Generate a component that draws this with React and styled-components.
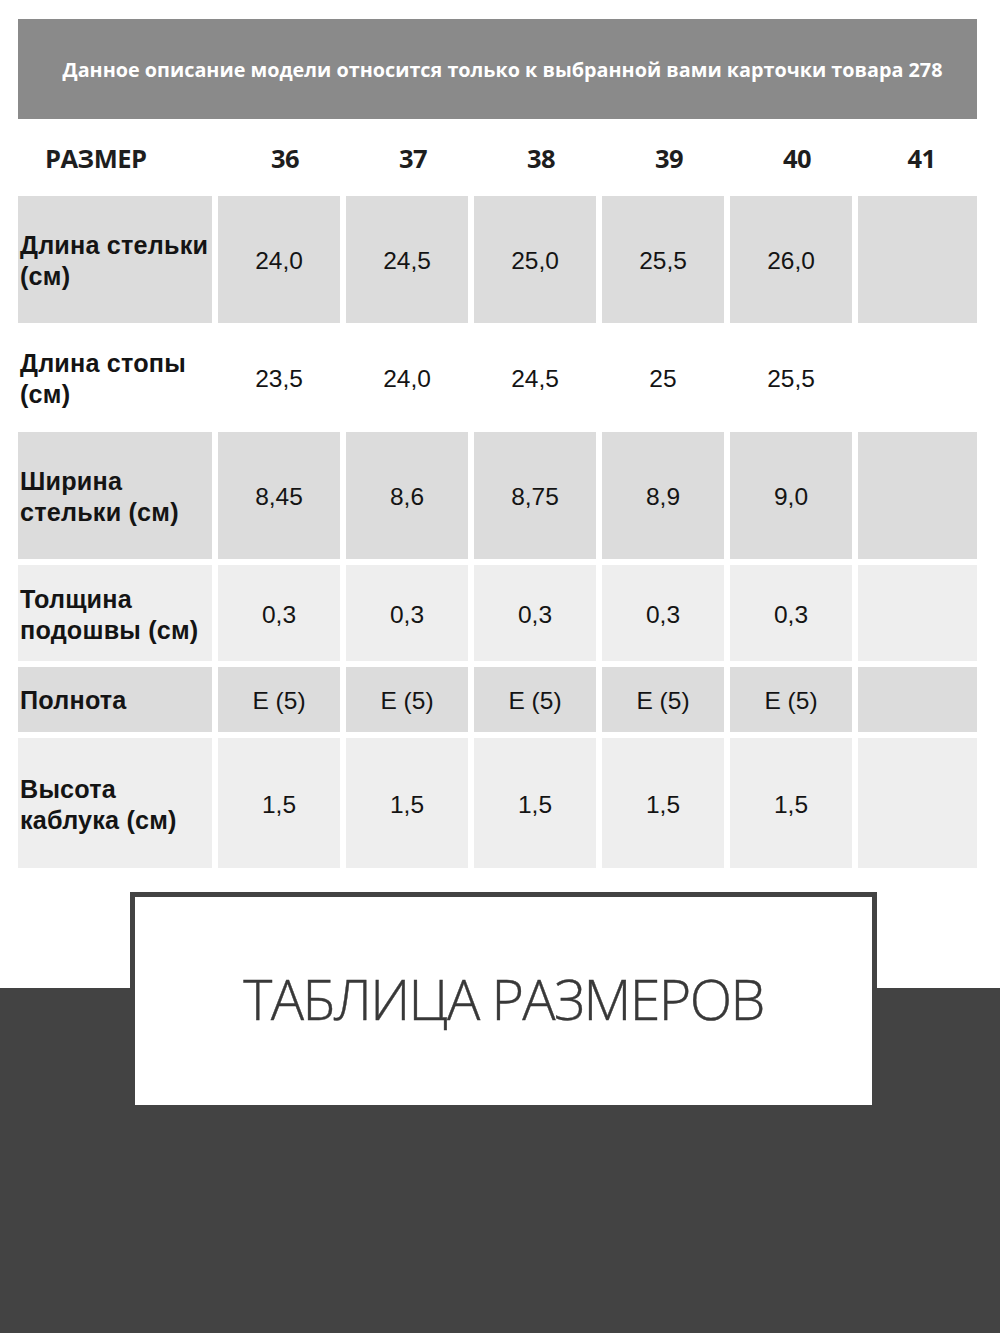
import React from 'react';
import styled, { createGlobalStyle } from 'styled-components';

const VARS = {
  bar: '#8a8a8a',
  cellDark: '#dcdcdc',
  cellLight: '#eeeeee',
  ink: '#141414',
  band: '#434343',
};

const GlobalStyle = createGlobalStyle`
  html, body {
    margin: 0;
    padding: 0;
    background: #fff;
  }
  body {
    font-family: "Liberation Sans", Arial, sans-serif;
  }
`;

const Page = styled.div`
  width: 1000px;
  height: 1333px;
  overflow: hidden;
  background: #fff;
`;

const TableArea = styled.div`
  padding: 19px 23px 0 18px;
`;

const Banner = styled.div`
  height: 100px;
  background: ${VARS.bar};
  display: flex;
  align-items: center;
  justify-content: center;
  padding-left: 10px;
  box-sizing: border-box;
  color: #fff;
  font-family: "Open Sans", sans-serif;
  font-weight: 700;
  font-size: 19.8px;
  white-space: nowrap;
`;

const Grid = styled.div`
  display: grid;
  grid-template-columns: 194px repeat(5, 122px) 119px;
  column-gap: 6px;
`;

const HeadRow = styled(Grid)`
  height: 77px;
  align-items: center;
  font-family: "Open Sans", sans-serif;
  font-weight: 700;
  font-size: 25.5px;
  color: #1e1e1e;
`;

const HeadLabel = styled.div`
  padding-left: 27px;
  letter-spacing: -0.5px;
`;

const HeadNum = styled.div`
  text-align: center;
  padding-left: ${p => (p.$last ? '8px' : '12px')};
  letter-spacing: -0.5px;
`;

const Rows = styled.div`
  display: flex;
  flex-direction: column;
  gap: 6px;
`;

const Row = styled(Grid)`
  height: ${p => p.$h}px;
`;

const Cell = styled.div`
  background: ${p => p.$bg};
  display: flex;
  align-items: center;
  justify-content: center;
  padding-top: 3px;
  box-sizing: border-box;
  font-size: 24.5px;
  color: ${VARS.ink};
`;

const Label = styled(Cell)`
  justify-content: flex-start;
  padding-left: 2px;
  padding-top: ${p => (p.$single ? '2px' : '3px')};
  font-weight: 700;
  font-size: 25.2px;
  line-height: 31px;
  letter-spacing: 0.2px;
  white-space: nowrap;
`;

const Bottom = styled.div`
  height: 465px;
  background: linear-gradient(to bottom, #fff 0, #fff 120px, ${VARS.band} 120px, ${VARS.band} 100%);
  padding-top: 24px;
  box-sizing: border-box;
`;

const TitleBox = styled.div`
  margin-left: 130px;
  width: 747px;
  height: 213px;
  box-sizing: border-box;
  border: 5px solid ${VARS.band};
  border-bottom: none;
  background: #fff;
  display: flex;
  align-items: center;
  justify-content: center;
  padding-bottom: 6px;
`;

const Title = styled.h1`
  margin: 0;
  font-family: "Open Sans", sans-serif;
  font-weight: 300;
  font-size: 55.5px;
  letter-spacing: -1.6px;
  color: #383838;
  -webkit-text-stroke: 0.4px #383838;
`;

const sizes = ['36', '37', '38', '39', '40', '41'];

const rows = [
  { label: ['Длина стельки', '(см)'], values: ['24,0', '24,5', '25,0', '25,5', '26,0', ''], bg: VARS.cellDark, h: 127 },
  { label: ['Длина стопы', '(см)'], values: ['23,5', '24,0', '24,5', '25', '25,5', ''], bg: 'transparent', h: 97 },
  { label: ['Ширина', 'стельки (см)'], values: ['8,45', '8,6', '8,75', '8,9', '9,0', ''], bg: VARS.cellDark, h: 127 },
  { label: ['Толщина', 'подошвы (см)'], values: ['0,3', '0,3', '0,3', '0,3', '0,3', ''], bg: VARS.cellLight, h: 96 },
  { label: ['Полнота'], values: ['E (5)', 'E (5)', 'E (5)', 'E (5)', 'E (5)', ''], bg: VARS.cellDark, h: 65 },
  { label: ['Высота', 'каблука (см)'], values: ['1,5', '1,5', '1,5', '1,5', '1,5', ''], bg: VARS.cellLight, h: 130 },
];

const App = () => {
  return (
    <Page>
      <GlobalStyle />
      <TableArea>
        <Banner>Данное описание модели относится только к выбранной вами карточки товара 278</Banner>
        <HeadRow>
          <HeadLabel>РАЗМЕР</HeadLabel>
          {sizes.map((s, i) => (
            <HeadNum key={s} $last={i === sizes.length - 1}>{s}</HeadNum>
          ))}
        </HeadRow>
        <Rows>
          {rows.map(r => (
            <Row key={r.label[0]} $h={r.h}>
              <Label $bg={r.bg} $single={r.label.length === 1}>
                <div>
                  {r.label.map((l, i) => (
                    <div key={i}>{l}</div>
                  ))}
                </div>
              </Label>
              {r.values.map((v, i) => (
                <Cell key={i} $bg={r.bg}>{v}</Cell>
              ))}
            </Row>
          ))}
        </Rows>
      </TableArea>
      <Bottom>
        <TitleBox>
          <Title>ТАБЛИЦА РАЗМЕРОВ</Title>
        </TitleBox>
      </Bottom>
    </Page>
  );
};

export default App;
